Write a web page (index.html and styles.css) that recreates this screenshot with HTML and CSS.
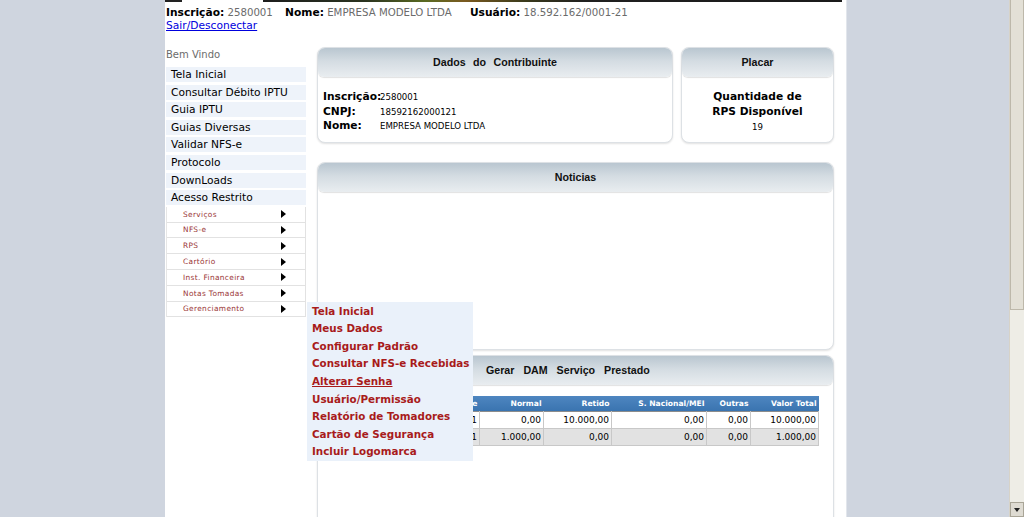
FILE: index.html
```html
<!DOCTYPE html>
<html lang="pt-BR">
<head>
<meta charset="utf-8">
<title>Dados do Contribuinte</title>
<link rel="stylesheet" href="styles.css">
</head>
<body>
<div class="screen">
  <div class="gutter"></div>
  <div class="container">
    <div class="banner"></div>
    <div class="userbar">
      <span class="grp g1"><b>Inscrição:</b> 2580001</span>
      <span class="grp g2"><b>Nome:</b> EMPRESA MODELO LTDA</span>
      <span class="grp"><b>Usuário:</b> 18.592.162/0001-21</span>
    </div>
    <div class="logout"><a href="#">Sair/Desconectar</a></div>
    <div class="main">
      <aside class="sidebar">
        <div class="welcome">Bem Vindo</div>
        <ul class="menu">
          <li>Tela Inicial</li>
          <li>Consultar Débito IPTU</li>
          <li>Guia IPTU</li>
          <li>Guias Diversas</li>
          <li>Validar NFS-e</li>
          <li>Protocolo</li>
          <li>DownLoads</li>
          <li>Acesso Restrito</li>
        </ul>
        <ul class="submenu">
          <li><span>Serviços</span><i class="arrow"></i></li>
          <li><span>NFS-e</span><i class="arrow"></i></li>
          <li><span>RPS</span><i class="arrow"></i></li>
          <li><span>Cartório</span><i class="arrow"></i></li>
          <li><span>Inst. Financeira</span><i class="arrow"></i></li>
          <li><span>Notas Tomadas</span><i class="arrow"></i></li>
          <li class="open"><span>Gerenciamento</span><i class="arrow"></i>
            <ul class="flyout">
              <li>Tela Inicial</li>
              <li>Meus Dados</li>
              <li>Configurar Padrão</li>
              <li>Consultar NFS-e Recebidas</li>
              <li class="hover">Alterar Senha</li>
              <li>Usuário/Permissão</li>
              <li>Relatório de Tomadores</li>
              <li>Cartão de Segurança</li>
              <li>Incluir Logomarca</li>
            </ul>
          </li>
        </ul>
      </aside>
      <section class="content">
        <div class="row">
          <div class="panel dados">
            <div class="panel-head">Dados do Contribuinte</div>
            <div class="dados-body">
              <span class="k">Inscrição:</span><span class="v">2580001</span>
              <span class="k">CNPJ:</span><span class="v">18592162000121</span>
              <span class="k">Nome:</span><span class="v">EMPRESA MODELO LTDA</span>
            </div>
          </div>
          <div class="panel placar">
            <div class="panel-head">Placar</div>
            <div class="placar-body">
              <div class="q">Quantidade de<br>RPS Disponível</div>
              <div class="n">19</div>
            </div>
          </div>
        </div>
        <div class="panel noticias">
          <div class="panel-head">Noticias</div>
        </div>
        <div class="panel dam">
          <div class="panel-head left">Gerar DAM Serviço Prestado</div>
          <table class="grid">
            <colgroup>
              <col class="c1"><col class="c2"><col class="c3"><col class="c4"><col class="c5"><col class="c6"><col class="c7">
            </colgroup>
            <thead>
              <tr><th></th><th>Qtde</th><th>Normal</th><th>Retido</th><th>S. Nacional/MEI</th><th>Outras</th><th>Valor Total</th></tr>
            </thead>
            <tbody>
              <tr><td></td><td>1</td><td>0,00</td><td>10.000,00</td><td>0,00</td><td>0,00</td><td>10.000,00</td></tr>
              <tr class="alt"><td></td><td>1</td><td>1.000,00</td><td>0,00</td><td>0,00</td><td>0,00</td><td>1.000,00</td></tr>
            </tbody>
          </table>
        </div>
      </section>
    </div>
  </div>
  <div class="outside"></div>
  <div class="scrollbar">
    <div class="thumb"></div>
    <div class="track"></div>
    <div class="btn-down"><i></i></div>
  </div>
</div>
</body>
</html>
```

FILE: styles.css
```css
* { box-sizing: border-box; }
html, body { margin: 0; padding: 0; }
body {
  background: #cfd5df;
  font-family: "DejaVu Sans", Verdana, sans-serif;
  font-size: 10.67px;
  color: #000;
  overflow: hidden;
}
ul { list-style: none; margin: 0; padding: 0; }

.screen { display: flex; height: 517px; overflow: hidden; }
.gutter { width: 165px; flex: none; }
.outside { flex: 1; border-left: 1px solid #e2e6ec; }
.container {
  width: 681px;
  flex: none;
  background: #fff;
  height: 517px;
  overflow: hidden;
}

.banner {
  height: 2px;
  margin-right: 4px;
  background: linear-gradient(90deg, #222 0, #222 17px, #fff 17px, #fff 98px, #1d1d1d 98px, #2a3320 200px, #5a6a22 260px, #7a5a20 300px, #3a3a1c 360px, #202020 420px, #1a1a1a 100%);
}

.userbar {
  padding: 4px 0 0 1px;
  line-height: 13px;
  font-size: 10.2px;
  color: #6b6b6b;
  white-space: nowrap;
}
.userbar b { color: #000; font-size: 10.67px; }
.grp.g1 { margin-right: 9px; }
.grp.g2 { margin-right: 15px; }

.logout { padding-left: 1px; line-height: 13px; }
.logout a { color: #0000dd; text-decoration: underline; }

.main { display: flex; margin-top: 15px; padding-left: 1px; }

.sidebar { width: 140px; flex: none; padding-top: 1px; }
.welcome { color: #6b6b6b; font-size: 10px; line-height: 14px; }
.menu { margin-top: 5px; }
.menu li {
  height: 15px;
  line-height: 15px;
  margin-bottom: 2.6px;
  padding-left: 5px;
  background: #eef3fa;
  white-space: nowrap;
}

.submenu { margin-top: -1px; border-left: 1px solid #e6e6e6; }
.submenu li {
  position: relative;
  height: 15.8px;
  display: flex;
  align-items: center;
  justify-content: space-between;
  padding: 0 19px 0 16px;
  border-bottom: 1px solid #e2e2e2;
  border-right: 1px solid #e2e2e2;
  font-size: 7.4px;
  letter-spacing: 0.35px;
  color: #9a3535;
  background: #fff;
}
.arrow {
  width: 0; height: 0;
  border-left: 5px solid #000;
  border-top: 4px solid transparent;
  border-bottom: 4px solid transparent;
}

.flyout {
  position: absolute;
  left: 140px;
  top: 0;
  width: 166px;
  padding-top: 1px;
  background: #eaf1fa;
  z-index: 5;
}
.submenu .flyout li {
  display: block;
  height: 17.6px;
  line-height: 17.6px;
  padding: 0 0 0 5px;
  border: 0;
  background: transparent;
  font-size: 10.35px;
  font-weight: bold;
  letter-spacing: 0;
  color: #a81b1b;
  white-space: nowrap;
}
.submenu .flyout li.hover { text-decoration: underline; }

.content { flex: 1; padding: 0 12px 0 11px; }
.row { display: flex; gap: 8px; }

.panel {
  border: 1px solid #dde1e5;
  border-radius: 8px;
  background: #fff;
  box-shadow: 0 1px 2px rgba(0, 0, 0, 0.12);
}
.panel-head {
  height: 29px;
  line-height: 28px;
  border-radius: 7px 7px 6px 6px;
  background: linear-gradient(#b9c6d0, #d4dce2 45%, #e9edf0 100%);
  box-shadow: 0 1px 1px rgba(0, 0, 0, 0.12);
  font-family: "Liberation Sans", Arial, sans-serif;
  font-weight: bold;
  font-size: 10.67px;
  word-spacing: 4.5px;
  color: #111;
  text-align: center;
}
.panel-head.left { text-align: left; padding-left: 168px; word-spacing: 6px; }

.dados { width: 356px; height: 96px; }
.placar { flex: 1; height: 96px; }
.dados-body {
  display: grid;
  grid-template-columns: 57px 1fr;
  padding: 13px 0 0 5px;
  line-height: 14.5px;
}
.dados-body .k { font-weight: bold; }
.dados-body .v { font-size: 8.6px; }

.placar-body { text-align: center; padding-top: 13px; }
.placar-body .q { font-weight: bold; line-height: 14.5px; }
.placar-body .n { font-size: 8.6px; line-height: 16px; }

.noticias { margin-top: 19px; height: 188px; }
.dam { margin-top: 5px; height: 220px; }

.grid {
  margin: 11px 0 0 5px;
  width: 495px;
  border-collapse: collapse;
  table-layout: fixed;
  font-size: 9px;
}
.c1 { width: 122px; } .c2 { width: 34px; } .c3 { width: 64px; }
.c4 { width: 68px; } .c5 { width: 95px; } .c6 { width: 44px; } .c7 { width: 68px; }
.grid th {
  height: 15px;
  background: linear-gradient(#4e86c0, #3a74b0);
  color: #fff;
  font-size: 7.6px;
  font-weight: bold;
  text-align: right;
  padding: 0 2px 0 0;
  white-space: nowrap;
}
.grid td {
  height: 17px;
  text-align: right;
  padding: 0 2px 0 0;
  border-left: 1px solid #6f6f6f;
  border-top: 1px solid #8c8c8c;
  border-right: 1px solid #c8c8c8;
  border-bottom: 1px solid #c8c8c8;
  white-space: nowrap;
}
.grid tr.alt td { background: #e2e2e2; }

.scrollbar {
  width: 15px;
  flex: none;
  display: flex;
  flex-direction: column;
  background: #eeede6;
  border-left: 1px solid #d7d3c8;
}
.thumb {
  height: 310px;
  background: #e3e0d6;
  border: 1px solid #bdb8aa;
  border-top: 0;
}
.track { flex: 1; }
.btn-down {
  height: 15px;
  display: flex;
  align-items: center;
  justify-content: center;
  background: #dedbd2;
  border: 1px solid #a9a597;
}
.btn-down i {
  width: 0; height: 0;
  border-top: 4px solid #222;
  border-left: 3.5px solid transparent;
  border-right: 3.5px solid transparent;
}
```
